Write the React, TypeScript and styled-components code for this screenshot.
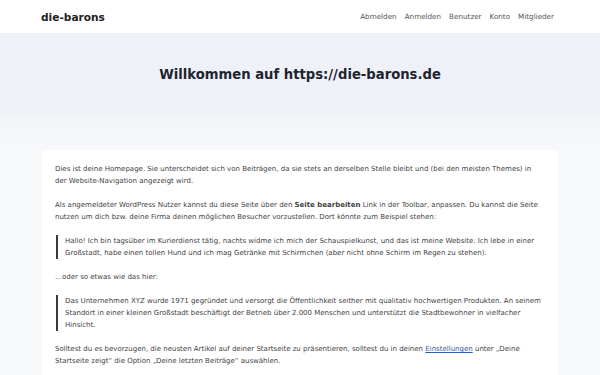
import React from 'react';
import styled, { createGlobalStyle } from 'styled-components';

const GlobalStyle = createGlobalStyle`
  body {
    margin: 0;
    background: #f8f9fb;
    font-family: 'DejaVu Sans', 'Liberation Sans', sans-serif;
    color: #333;
  }
`;

const navLinks = ['Abmelden', 'Anmelden', 'Benutzer', 'Konto', 'Mitglieder'];

export default function App() {
  return (
    <>
      <GlobalStyle />
      <St.Header>
        <St.Logo>die-barons</St.Logo>
        <St.Nav>
          {navLinks.map((l) => (
            <St.NavLink key={l}>{l}</St.NavLink>
          ))}
        </St.Nav>
      </St.Header>
      <St.Hero>
        <St.Title>Willkommen auf https://die-barons.de</St.Title>
      </St.Hero>
      <St.Main>
        <St.Card>
          <St.P>
            Dies ist deine Homepage. Sie unterscheidet sich von Beiträgen, da sie stets an derselben Stelle bleibt und (bei den meisten Themes) in der
            Website-Navigation angezeigt wird.
          </St.P>
          <St.P>
            Als angemeldeter WordPress Nutzer kannst du diese Seite über den <b>Seite bearbeiten</b> Link in der Toolbar, anpassen. Du kannst die Seite
            nutzen um dich bzw. deine Firma deinen möglichen Besucher vorzustellen. Dort könnte zum Beispiel stehen:
          </St.P>
          <St.Quote>
            Hallo! Ich bin tagsüber im Kurierdienst tätig, nachts widme ich mich der Schauspielkunst, und das ist meine Website. Ich lebe in einer
            Großstadt, habe einen tollen Hund und ich mag Getränke mit Schirmchen (aber nicht ohne Schirm im Regen zu stehen).
          </St.Quote>
          <St.P>…oder so etwas wie das hier:</St.P>
          <St.Quote>
            Das Unternehmen XYZ wurde 1971 gegründet und versorgt die Öffentlichkeit seither mit qualitativ hochwertigen Produkten. An seinem
            Standort in einer kleinen Großstadt beschäftigt der Betrieb über 2.000 Menschen und unterstützt die Stadtbewohner in vielfacher Hinsicht.
          </St.Quote>
          <St.P>
            Solltest du es bevorzugen, die neusten Artikel auf deiner Startseite zu präsentieren, solltest du in deinen{' '}
            <St.Link href="#">Einstellungen</St.Link> unter „Deine Startseite zeigt“ die Option „Deine letzten Beiträge“ auswählen.
          </St.P>
        </St.Card>
      </St.Main>
    </>
  );
}

const St = {
  Header: styled.header`
    height: 33px;
    background: #fff;
    display: flex;
    align-items: center;
    justify-content: space-between;
    padding: 0 46px 0 41px;
  `,
  Logo: styled.div`
    font-size: 10.6px;
    font-weight: 700;
    color: #222;
  `,
  Nav: styled.nav`
    display: flex;
    gap: 8px;
  `,
  NavLink: styled.a`
    font-size: 7.2px;
    color: #555;
  `,
  Hero: styled.section`
    height: 82px;
    background: #eef2f8;
    display: flex;
    align-items: center;
    justify-content: center;
  `,
  Title: styled.h1`
    margin: 0;
    font-size: 13.2px;
    font-weight: 700;
    color: #1f2430;
  `,
  Main: styled.main`
    background: linear-gradient(#f2f4f8, #f8f9fb 40px);
    padding: 35px 42px 0;
  `,
  Card: styled.article`
    background: #fff;
    padding: 13px 13px 4px;
    min-height: 240px;
  `,
  P: styled.p`
    margin: 0 0 12px;
    font-size: 7px;
    line-height: 12px;
    color: #3f3f3f;
  `,
  Quote: styled.blockquote`
    margin: 0 0 12px 1px;
    padding: 0 0 0 7px;
    border-left: 2px solid #3a3a3a;
    font-size: 7px;
    line-height: 12px;
    color: #3f3f3f;
  `,
  Link: styled.a`
    color: #2f5ea8;
  `,
};
